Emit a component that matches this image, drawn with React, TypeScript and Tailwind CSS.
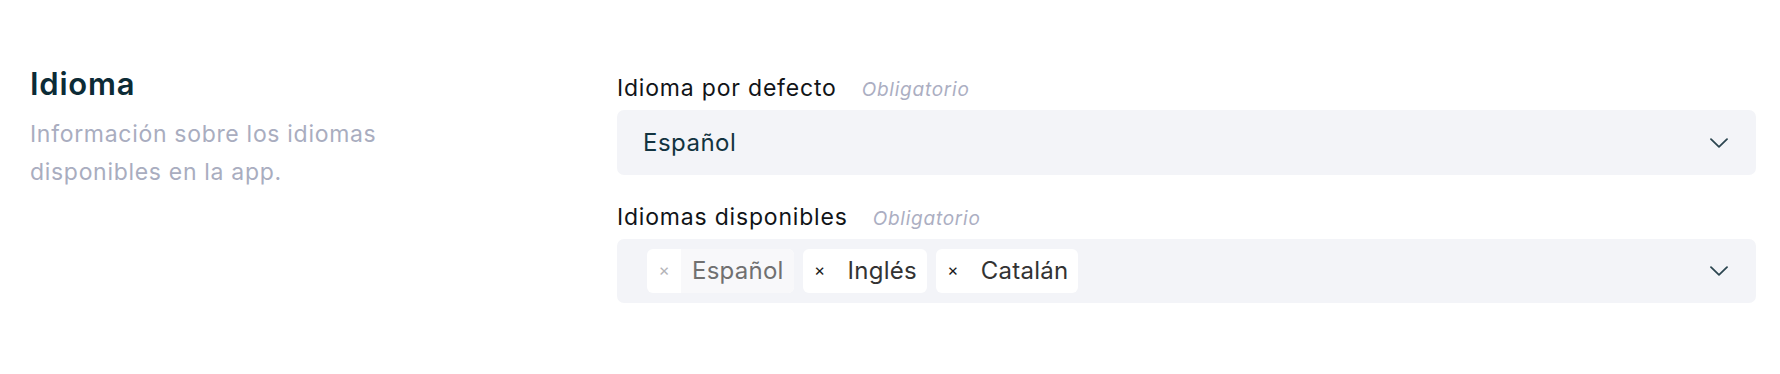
const font = { fontFamily: 'Inter, "Noto Sans", sans-serif' }

function Chevron() {
  return (
    <svg width="18" height="10" viewBox="0 0 18 10" fill="none" className="shrink-0">
      <path d="M1 1.2 L9 8.8 L17 1.2" stroke="#2b4550" strokeWidth="1.8" strokeLinecap="round" strokeLinejoin="round" />
    </svg>
  )
}

function Label({ text }: { text: string }) {
  return (
    <div className="flex items-baseline leading-[32px] mb-[4px]">
      <span className="text-[23px] tracking-[0.035em] text-[#111418]">{text}</span>
      <span className="ml-[25px] text-[19px] italic tracking-[0.04em] text-[#abaec2]">Obligatorio</span>
    </div>
  )
}

function Chip({ text, disabled }: { text: string; disabled?: boolean }) {
  return (
    <div className="flex h-[44px] items-stretch overflow-hidden rounded-[6px] bg-white">
      <span
        className={
          'flex w-[34px] items-center justify-center text-[17px] ' +
          (disabled ? 'text-[#b4b4b8]' : 'text-[#1a1a1a]')
        }
      >
        ×
      </span>
      <span
        className={
          'flex items-center pl-[11px] pr-[10px] text-[24px] tracking-[0.01em] ' +
          (disabled ? 'bg-[#f8f8fa] text-[#707070]' : 'text-[#333333]')
        }
      >
        {text}
      </span>
    </div>
  )
}

export default function App() {
  return (
    <div className="min-h-screen bg-white" style={font}>
      <div className="grid grid-cols-[587px_1fr] pl-[30px] pr-[24px] pt-[66px]">
        <div>
          <h2 className="text-[31px] font-semibold leading-[36px] tracking-[0.025em] text-[#0c2b36]">Idioma</h2>
          <p className="mt-[13px] text-[23px] leading-[38px] tracking-[0.03em] text-[#a9adbf]">
            Información sobre los idiomas
            <br />
            disponibles en la app.
          </p>
        </div>
        <div className="pt-[6px]">
          <Label text="Idioma por defecto" />
          <div className="flex h-[65px] items-center justify-between rounded-[7px] bg-[#f3f4f8] pl-[26px] pr-[28px]">
            <span className="text-[24px] tracking-[0.02em] text-[#123340]">Español</span>
            <Chevron />
          </div>
          <div className="mt-[26px]">
            <Label text="Idiomas disponibles" />
            <div className="flex h-[64px] items-center justify-between rounded-[7px] bg-[#f3f4f8] pl-[30px] pr-[28px]">
              <div className="flex items-center gap-[9px]">
                <Chip text="Español" disabled />
                <Chip text="Inglés" />
                <Chip text="Catalán" />
              </div>
              <Chevron />
            </div>
          </div>
        </div>
      </div>
    </div>
  )
}
